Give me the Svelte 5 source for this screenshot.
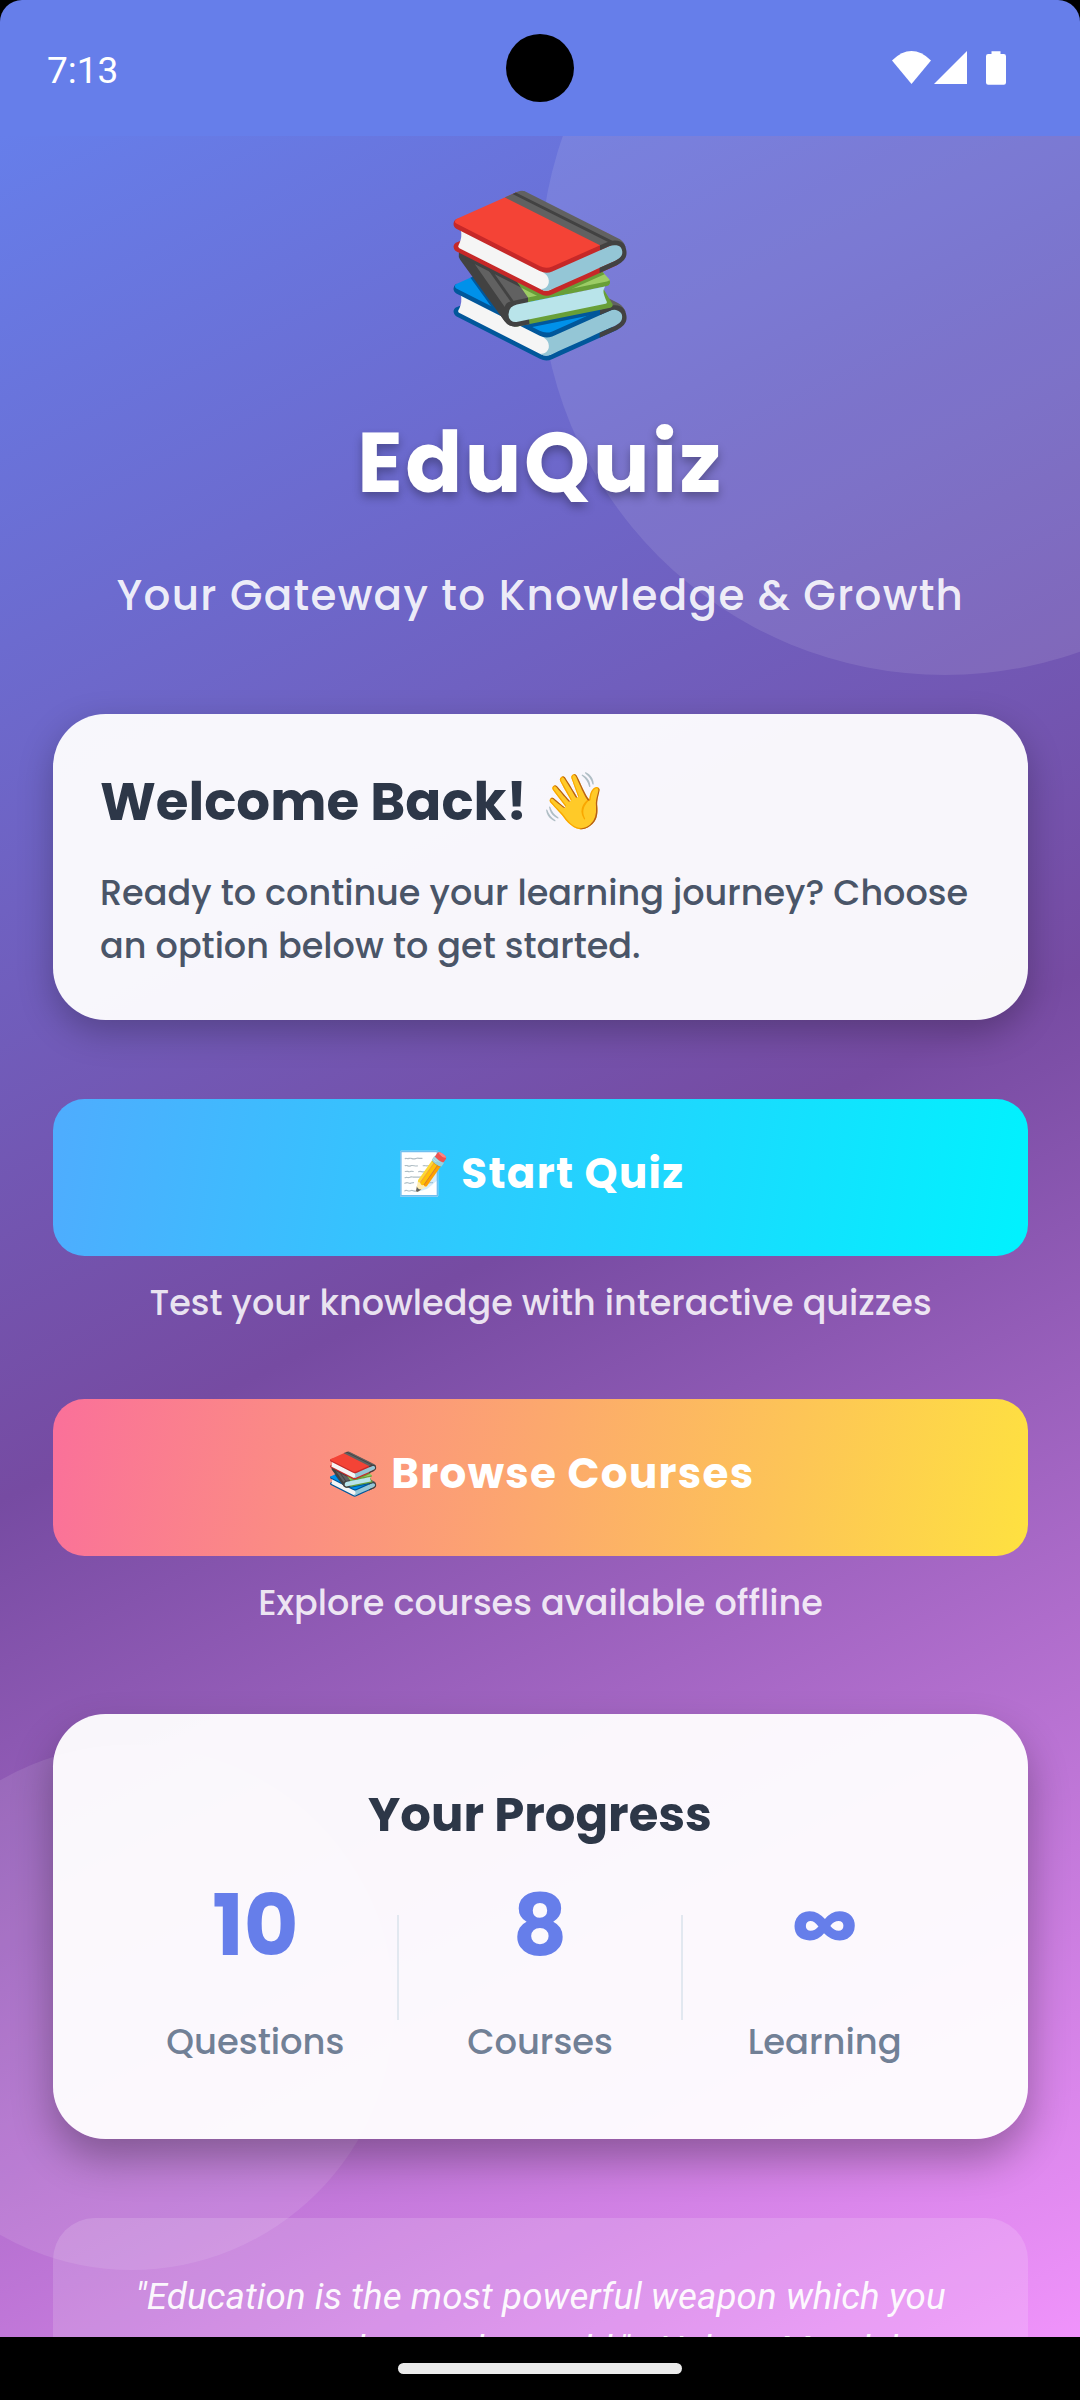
<script>
  const actions = [
    { icon: '📝', label: 'Start Quiz', caption: 'Test your knowledge with interactive quizzes', tone: 'blue' },
    { icon: '📚', label: 'Browse Courses', caption: 'Explore courses available offline', tone: 'sunset' }
  ];
  const stats = [
    { value: '10', label: 'Questions' },
    { value: '8', label: 'Courses' },
    { value: '∞', label: 'Learning' }
  ];
</script>

<div class="device">
  <header class="status">
    <span class="time">7:13</span>
    <span class="camera"></span>
    <svg class="indicators" width="116" height="36" viewBox="0 0 116 36" fill="#fff">
      <path d="M0 10.4Q19.5 -8.4 39 10.4L19.5 34Z" />
      <path d="M42 34L75 1V34Z" />
      <path d="M99.5 1.2h9v2.8h3.3a2.2 2.2 0 0 1 2.2 2.2v26.3a2.2 2.2 0 0 1-2.2 2.2H96.2a2.2 2.2 0 0 1-2.2-2.2V6.2a2.2 2.2 0 0 1 2.2-2.2h3.3z" />
    </svg>
  </header>

  <main class="screen">
    <div class="bubble large"></div>
    <div class="bubble small"></div>

    <div class="content">
      <div class="logo">📚</div>
      <h1>EduQuiz</h1>
      <p class="tagline">Your Gateway to Knowledge &amp; Growth</p>

      <section class="card welcome">
        <h2>Welcome Back! <span class="wave">👋</span></h2>
        <p>Ready to continue your learning journey? Choose an option below to get started.</p>
      </section>

      <div class="actions">
        {#each actions as a}
          <div class="action">
            <button class={a.tone}><span class="emoji">{a.icon}</span> {a.label}</button>
            <p>{a.caption}</p>
          </div>
        {/each}
      </div>

      <section class="card progress">
        <h3>Your Progress</h3>
        <div class="stats">
          {#each stats as s, i}
            {#if i > 0}<span class="divider"></span>{/if}
            <div class="stat">
              <strong>{s.value}</strong>
              <span>{s.label}</span>
            </div>
          {/each}
        </div>
      </section>

      <blockquote>"Education is the most powerful weapon which you can use to change the world." - Nelson Mandela</blockquote>
    </div>
  </main>

  <footer class="nav"><span></span></footer>
</div>

<style>
  :global(body) { margin: 0; background: #000; }
  h1, h2, h3, p, blockquote { margin: 0; }
  .device {
    width: 1080px;
    height: 2400px;
    display: flex;
    flex-direction: column;
    overflow: hidden;
    background: #000;
    font-family: Poppins, "Noto Color Emoji", sans-serif;
    font-weight: 500;
  }
  .status {
    flex: none;
    height: 136px;
    box-sizing: border-box;
    padding: 0 47px;
    display: grid;
    grid-template-columns: 1fr 68px 1fr;
    align-items: center;
    background: #667eea;
    border-radius: 22px 22px 0 0;
  }
  .status .time { font: 400 37px/44px Roboto, sans-serif; color: #fff; padding-top: 5px; }
  .camera { width: 68px; height: 68px; border-radius: 50%; background: #000; }
  .indicators { justify-self: end; margin-right: 25px; }
  .screen {
    position: relative;
    flex: none;
    height: 2201px;
    overflow: hidden;
    background: linear-gradient(153.9deg, #667eea 0%, #764ba2 50%, #f093fb 100%);
  }
  .bubble { position: absolute; border-radius: 50%; background: rgba(255, 255, 255, 0.1); }
  .large { width: 810px; height: 810px; top: -271px; right: -270px; }
  .small { width: 525px; height: 525px; left: -131px; top: 1609px; }
  .content {
    position: relative;
    padding: 44px 52px 0 53px;
    display: flex;
    flex-direction: column;
  }
  .logo { font-size: 157.5px; line-height: 187px; text-align: center; }
  h1 {
    margin-top: 36px;
    font-size: 84px;
    line-height: 120px;
    font-weight: 700;
    letter-spacing: 2.625px;
    text-align: center;
    color: #fff;
    text-shadow: 0 5px 10px rgba(0, 0, 0, 0.3);
  }
  .tagline {
    margin-top: 43px;
    font-size: 42px;
    line-height: 60px;
    letter-spacing: 1.3125px;
    text-align: center;
    color: rgba(255, 255, 255, 0.9);
  }
  .card { background: rgba(255, 255, 255, 0.95); border-radius: 52.5px; box-sizing: border-box; }
  .welcome {
    margin-top: 88px;
    height: 306px;
    padding: 50.5px 40px 0 47px;
    box-shadow: 0 12px 34px rgba(0, 0, 0, 0.25);
  }
  .welcome h2 {
    font-size: 53.1px;
    line-height: 74px;
    font-weight: 700;
    color: #2d3748;
    white-space: nowrap;
  }
  .wave { font-size: 55px; line-height: 1; margin-left: 2px; }
  .welcome p {
    margin-top: 27px;
    font-size: 35px;
    line-height: 53px;
    color: #4a5568;
  }
  .actions { margin-top: 79px; display: flex; flex-direction: column; gap: 70px; }
  .action { display: flex; flex-direction: column; }
  button {
    height: 157px;
    border: 0;
    border-radius: 31.5px;
    padding: 0 0 9px 1px;
    font: 700 42px/63px Poppins, "Noto Color Emoji", sans-serif;
    letter-spacing: 1.3125px;
    color: #fff;
  }
  .blue { background: linear-gradient(99.16deg, #4facfe, #00f2fe); }
  .sunset { background: linear-gradient(99.16deg, #fa709a, #fee140); }
  .action p {
    margin-top: 21px;
    font-size: 35px;
    line-height: 52px;
    text-align: center;
    color: rgba(255, 255, 255, 0.85);
  }
  .progress {
    margin-top: 85px;
    height: 425px;
    padding: 66.5px 62px 0 61px;
    box-shadow: 0 20px 40px rgba(0, 0, 0, 0.3);
  }
  .progress h3 {
    font-size: 48.1px;
    line-height: 66px;
    font-weight: 700;
    text-align: center;
    color: #2d3748;
  }
  .stats { margin-top: 20.5px; display: flex; align-items: center; }
  .stat { flex: 1; display: flex; flex-direction: column; align-items: center; }
  .stat strong { font-size: 84px; line-height: 118px; font-weight: 700; color: #667eea; }
  .stat span { margin-top: 31px; font-size: 35.3px; line-height: 52px; color: #718096; }
  .divider { width: 2px; height: 105px; background: #e2e8f0; }
  blockquote {
    margin-top: 79px;
    padding: 52px 52.5px;
    border-radius: 42px;
    background: rgba(255, 255, 255, 0.15);
    font: italic 400 36.75px/53px Roboto, sans-serif;
    letter-spacing: 0.1px;
    text-align: center;
    color: rgba(255, 255, 255, 0.95);
  }
  .nav {
    flex: 1;
    display: flex;
    align-items: center;
    justify-content: center;
    background: #000;
  }
  .nav span { width: 284px; height: 11px; border-radius: 6px; background: #ebebeb; }
</style>
